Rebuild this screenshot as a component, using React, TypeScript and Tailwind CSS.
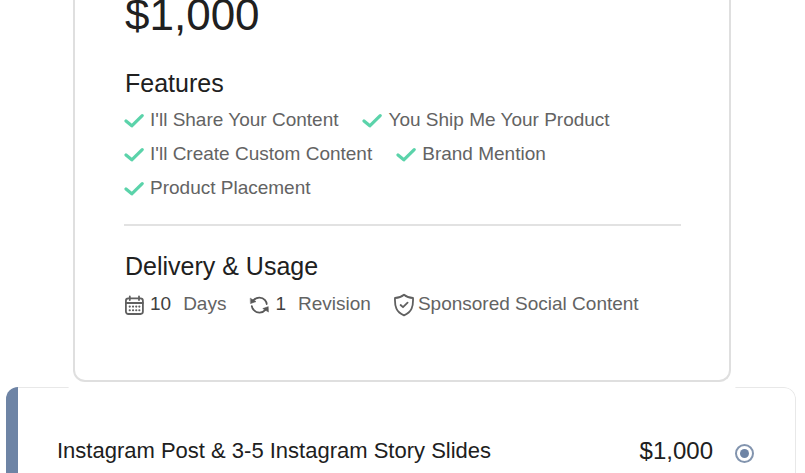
import React from 'react';

const features = [
    "I'll Share Your Content",
    'You Ship Me Your Product',
    "I'll Create Custom Content",
    'Brand Mention',
    'Product Placement',
];

const CheckIcon = () => (
    <svg className="w-5 h-5 shrink-0 translate-y-px" viewBox="0 0 20 20" fill="none" stroke="#5bd3aa" strokeWidth="3.2" strokeLinecap="round" strokeLinejoin="round">
        <path d="M2 10 L7.8 14.8 L18.2 4.6" />
    </svg>
);

const CalendarIcon = () => (
    <svg className="w-5 h-5 shrink-0 translate-y-px" viewBox="0 0 20 20" fill="none" stroke="#606060" strokeWidth="1.8" strokeLinecap="round">
        <rect x="1.9" y="3.4" width="17" height="15.6" rx="2.4" />
        <path d="M1.9 8 H18.9 M5.8 1.4 V5 M15 1.4 V5" />
        <path d="M9 11.6 H9.1 M12.2 11.6 H12.3 M15.3 11.6 H15.4 M5.7 15.2 H5.8 M9 15.2 H9.1 M12.2 15.2 H12.3 M5.7 11.6 H5.8 M15.3 15.2 H15.4" strokeWidth="2.1" />
    </svg>
);

const RevisionIcon = () => (
    <svg className="w-5 h-5 shrink-0 translate-y-px" viewBox="0 0 20 20" fill="none" stroke="#585858" strokeWidth="1.8" strokeLinecap="round">
        <path d="M4.4 5.4 C7.4 1.8 13 1.6 16 5.2 C17 6.4 17.6 7.6 17.7 9" />
        <path d="M16.4 14.8 C13.4 18.4 7.8 18.6 4.8 15 C3.6 13.8 3 12.6 2.8 11.2" />
        <path d="M1.6 3.4 L7 6.6 L1.8 8.4 Z M19.2 16.8 L13.8 13.6 L19 11.8 Z" fill="#585858" stroke="#585858" strokeWidth="0.6" strokeLinejoin="round" />
    </svg>
);

const ShieldIcon = () => (
    <svg className="w-5 h-6 shrink-0 translate-y-px" viewBox="0 0 20 24" fill="none" stroke="#606060" strokeWidth="1.8" strokeLinecap="round" strokeLinejoin="round">
        <path d="M10 1.8 C7.6 3.8 4.4 4.9 1 5 C0.6 13.5 2.2 19 10 22.4 C17.8 19 19.4 13.5 19 5 C15.6 4.9 12.4 3.8 10 1.8 Z" />
        <path d="M6.6 12 L9 14.2 L13.6 9.6" />
    </svg>
);

export default function App() {
    return (
        <div className="h-screen overflow-hidden bg-white pl-[6px] pr-[9px] font-['Liberation_Sans',Arial,sans-serif] text-[#202020]">
            {/* Package details */}
            <section className="relative z-10 ml-[67px] mr-[65px] rounded-b-xl border-2 border-t-0 border-[#dfdfdf] bg-white pl-[49px] pr-12 pb-16 ring-[12px] ring-white">
                <p className="pl-px text-[44px] leading-[30px]">$1,000</p>

                <h2 className="mt-[38px] pl-px text-[25px] leading-[30px]">Features</h2>
                <ul className="mt-[10px] flex flex-wrap gap-x-6 gap-y-[10px] text-[19px] leading-6 text-[#636363]">
                    {features.map((feature) => (
                        <li key={feature} className="flex items-center gap-1.5">
                            <CheckIcon />
                            {feature}
                        </li>
                    ))}
                </ul>

                <hr className="mt-6 border-t-2 border-[#e2e2e2]" />

                <h2 className="mt-[25px] pl-px text-[25px] leading-[30px]">Delivery &amp; Usage</h2>
                <ul className="mt-[11px] flex flex-wrap gap-x-[23px] gap-y-[10px] text-[19px] leading-6 text-[#636363]">
                    <li className="flex items-center gap-1.5">
                        <CalendarIcon />
                        <span className="flex gap-3">
                            <span className="text-[#404040]">10</span>
                            <span>Days</span>
                        </span>
                    </li>
                    <li className="flex items-center gap-1.5">
                        <RevisionIcon />
                        <span className="flex gap-3">
                            <span className="text-[#404040]">1</span>
                            <span>Revision</span>
                        </span>
                    </li>
                    <li className="flex items-center gap-1">
                        <ShieldIcon />
                        Sponsored Social Content
                    </li>
                </ul>
            </section>

            {/* Selectable package */}
            <label className="mt-[5px] flex overflow-hidden rounded-xl">
                <span className="w-3 shrink-0 bg-[#6e84a5]" />
                <span className="flex flex-1 items-center rounded-r-xl border border-l-0 border-[#e8e8e8] pl-[39px] pr-[41px] py-12 leading-[30px]">
                    <span className="flex-1 text-[22px]">Instagram Post &amp; 3-5 Instagram Story Slides</span>
                    <span className="text-[24px]">$1,000</span>
                    <input
                        type="radio"
                        name="package"
                        defaultChecked
                        className="ml-[22px] size-[19px] shrink-0 translate-y-0.5 appearance-none rounded-full border-2 border-[#8294ae] bg-white bg-clip-content p-[3px] checked:bg-[#6e84a5]"
                    />
                </span>
            </label>
        </div>
    );
}
